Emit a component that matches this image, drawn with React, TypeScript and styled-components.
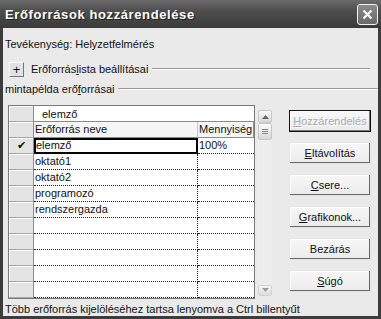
import { FC, Fragment } from 'react';
import styled, { createGlobalStyle } from 'styled-components';

const GlobalStyle = createGlobalStyle`
  html, body {
    margin: 0;
    padding: 0;
    background: #3e3e3e;
  }
  body {
    font-family: 'Liberation Sans', Arial, sans-serif;
    font-size: 11px;
    color: #111;
  }
`;

const Window = styled.div`
  width: 381px;
  height: 319px;
  box-sizing: border-box;
  display: flex;
  flex-direction: column;
  background: #3c3c3c;
`;

const TitleBar = styled.div`
  height: 28px;
  flex: none;
  display: flex;
  align-items: center;
  justify-content: space-between;
  padding: 0 3px 0 5px;
  background: linear-gradient(#6c6c6c, #505050 35%, #444 70%, #3a3a3a);
`;

const Title = styled.span`
  font-family: 'Liberation Sans', Arial, sans-serif;
  font-weight: bold;
  font-size: 13px;
  color: #fff;
  letter-spacing: 0.6px;
  text-shadow: 1px 1px 0 #222;
`;

const CloseButton = styled.div`
  width: 19px;
  height: 19px;
  border: 1px solid #f2f2f2;
  border-radius: 3px;
  background: linear-gradient(#8a8a8a, #6a6a6a);
  display: flex;
  align-items: center;
  justify-content: center;
`;

const Body = styled.div`
  flex: 1;
  margin: 0 3px 3px;
  padding: 0 0 0 2px;
  background: #eaeaea;
  display: flex;
  flex-direction: column;
`;

const Line = styled.div<{ $top?: number }>`
  height: 14px;
  line-height: 14px;
  margin-top: ${(p) => p.$top ?? 0}px;
  white-space: nowrap;
`;

const Expander = styled.div`
  display: flex;
  align-items: center;
  height: 16px;
  margin-top: 10px;
  padding-left: 4px;
  padding-right: 8px;
`;

const PlusBox = styled.div`
  width: 15px;
  height: 15px;
  box-sizing: border-box;
  border-top: 1px solid #fff;
  border-left: 1px solid #fff;
  border-right: 1px solid #777;
  border-bottom: 1px solid #777;
  background: #e2e2e2;
  display: flex;
  align-items: center;
  justify-content: center;
  font-size: 13px;
  line-height: 1;
`;

const Caption = styled.span<{ $gap?: number }>`
  margin-left: ${(p) => p.$gap ?? 0}px;
  white-space: nowrap;
`;

const Rule = styled.div`
  flex: 1;
  height: 0;
  margin-left: 4px;
  border-top: 1px solid #9a9a9a;
  border-bottom: 1px solid #fff;
`;

const GroupRow = styled.div`
  display: flex;
  align-items: center;
  height: 14px;
  margin-top: 5px;
`;

const Main = styled.div`
  display: flex;
  margin-top: 9px;
  padding-left: 3px;
`;

const Table = styled.div`
  width: 247px;
  height: 194px;
  box-sizing: border-box;
  border: 1px solid #7a7a7a;
  background: #fff;
  display: grid;
  grid-template-columns: 25px 164px 56px;
  grid-auto-rows: 16px;
  align-content: start;
`;

const RowHead = styled.div`
  background: #e4e4e4;
  box-sizing: border-box;
  border-right: 1px solid #8c8c8c;
  border-bottom: 1px solid #a8a8a8;
  box-shadow: inset 1px 1px 0 #fafafa;
  display: flex;
  align-items: center;
  justify-content: center;
  font-size: 11px;
`;

const EditCell = styled.div`
  grid-column: span 2;
  box-sizing: border-box;
  border-bottom: 1px solid #8c8c8c;
  padding-left: 8px;
  line-height: 16px;
`;

const HeadCell = styled.div<{ $last?: boolean }>`
  box-sizing: border-box;
  background: #f6f6f6;
  border-bottom: 1px solid #8c8c8c;
  border-right: 1px solid ${(p) => (p.$last ? '#8c8c8c' : '#c4c4c4')};
  padding-left: 1px;
  line-height: 15px;
  white-space: nowrap;
  overflow: hidden;
`;

const Cell = styled.div<{ $name?: boolean; $active?: boolean }>`
  box-sizing: border-box;
  border-bottom: 1px dotted #222;
  border-right: ${(p) => (p.$name ? '1px dotted #222' : 'none')};
  padding-left: 1px;
  line-height: 15px;
  white-space: nowrap;
  overflow: hidden;
  ${(p) =>
    p.$active &&
    `
    outline: 2px solid #000;
    outline-offset: -2px;
    padding-left: 2px;
  `}
`;

const ScrollBar = styled.div`
  width: 14px;
  height: 186px;
  margin-top: 5px;
  margin-left: 3px;
  display: flex;
  flex-direction: column;
  background: #ededed;
`;

const ScrollBtn = styled.div<{ $h: number; $faded?: boolean }>`
  height: ${(p) => p.$h}px;
  box-sizing: border-box;
  border: 1px solid #c8c8c8;
  border-radius: 2px;
  background: linear-gradient(#fafafa, #d8d8d8);
  display: flex;
  align-items: center;
  justify-content: center;
  opacity: ${(p) => (p.$faded ? 0.7 : 1)};
`;

const Track = styled.div`
  flex: 1;
`;

const Buttons = styled.div`
  display: flex;
  flex-direction: column;
  gap: 10px;
  margin-top: 5px;
  margin-left: 17px;
`;

const Button = styled.div<{ $default?: boolean; $disabled?: boolean }>`
  width: 82px;
  height: 22px;
  box-sizing: border-box;
  display: flex;
  align-items: center;
  justify-content: center;
  background: linear-gradient(#f8f8f8, #eaeaea);
  border: 1px solid ${(p) => (p.$default ? '#111' : '#e4e4e4')};
  box-shadow: ${(p) =>
    p.$default
      ? 'inset -1px -1px 0 #777, inset 1px 1px 0 #fff'
      : 'inset -1px -1px 0 #6a6a6a, inset 1px 1px 0 #fff'};
  color: ${(p) => (p.$disabled ? '#a8a8a8' : '#111')};
  text-shadow: ${(p) => (p.$disabled ? '1px 1px 0 #fff' : 'none')};
  white-space: nowrap;
`;

const Status = styled.div`
  height: 14px;
  line-height: 14px;
  margin-top: 3px;
  white-space: nowrap;
`;

const rows: { name: string; qty: string }[] = [
  { name: 'elemző', qty: '100%' },
  { name: 'oktató1', qty: '' },
  { name: 'oktató2', qty: '' },
  { name: 'programozó', qty: '' },
  { name: 'rendszergazda', qty: '' },
  { name: '', qty: '' },
  { name: '', qty: '' },
  { name: '', qty: '' },
  { name: '', qty: '' },
  { name: '', qty: '' },
];

const buttons: { label: string; key: number; isDefault?: boolean; disabled?: boolean }[] = [
  { label: 'Hozzárendelés', key: 0, isDefault: true, disabled: true },
  { label: 'Eltávolítás', key: 0 },
  { label: 'Csere...', key: 0 },
  { label: 'Grafikonok...', key: 0 },
  { label: 'Bezárás', key: -1 },
  { label: 'Súgó', key: 0 },
];

const withKey = (label: string, key: number) =>
  key < 0 ? (
    label
  ) : (
    <>
      {label.slice(0, key)}
      <u>{label[key]}</u>
      {label.slice(key + 1)}
    </>
  );

const App: FC = () => (
  <>
    <GlobalStyle />
    <Window>
      <TitleBar>
        <Title>Erőforrások hozzárendelése</Title>
        <CloseButton>
          <svg width="11" height="11" viewBox="0 0 11 11">
            <path d="M1.5 1.5 L9.5 9.5 M9.5 1.5 L1.5 9.5" stroke="#fff" strokeWidth="2" />
          </svg>
        </CloseButton>
      </TitleBar>
      <Body>
        <Line $top={9}>Tevékenység: Helyzetfelmérés</Line>
        <Expander>
          <PlusBox>+</PlusBox>
          <Caption $gap={7}>
            Erőforrás<u>l</u>ista beállításai
          </Caption>
          <Rule />
        </Expander>
        <GroupRow>
          <Caption>
            mintapélda erő<u>f</u>orrásai
          </Caption>
          <Rule />
        </GroupRow>
        <Main>
          <Table>
            <RowHead />
            <EditCell>elemző</EditCell>
            <RowHead />
            <HeadCell>Erőforrás neve</HeadCell>
            <HeadCell $last>Mennyiség</HeadCell>
            {rows.map((r, i) => (
              <Fragment key={i}>
                <RowHead>{i === 0 ? '✔' : ''}</RowHead>
                <Cell $name $active={i === 0}>
                  {r.name}
                </Cell>
                <Cell>{r.qty}</Cell>
              </Fragment>
            ))}
          </Table>
          <ScrollBar>
            <ScrollBtn $h={13}>
              <svg width="7" height="5" viewBox="0 0 7 5">
                <path d="M0 5 L3.5 1 L7 5 Z" fill="#666" />
              </svg>
            </ScrollBtn>
            <ScrollBtn $h={17}>
              <svg width="6" height="5" viewBox="0 0 6 5">
                <path d="M0 0.5 H6 M0 2.5 H6 M0 4.5 H6" stroke="#888" strokeWidth="1" />
              </svg>
            </ScrollBtn>
            <Track />
            <ScrollBtn $h={11} $faded>
              <svg width="7" height="5" viewBox="0 0 7 5">
                <path d="M0 0 L3.5 4 L7 0 Z" fill="#777" />
              </svg>
            </ScrollBtn>
          </ScrollBar>
          <Buttons>
            {buttons.map((b) => (
              <Button key={b.label} $default={b.isDefault} $disabled={b.disabled}>
                {withKey(b.label, b.key)}
              </Button>
            ))}
          </Buttons>
        </Main>
        <Status>Több erőforrás kijelöléséhez tartsa lenyomva a Ctrl billentyűt</Status>
      </Body>
    </Window>
  </>
);

export default App;
